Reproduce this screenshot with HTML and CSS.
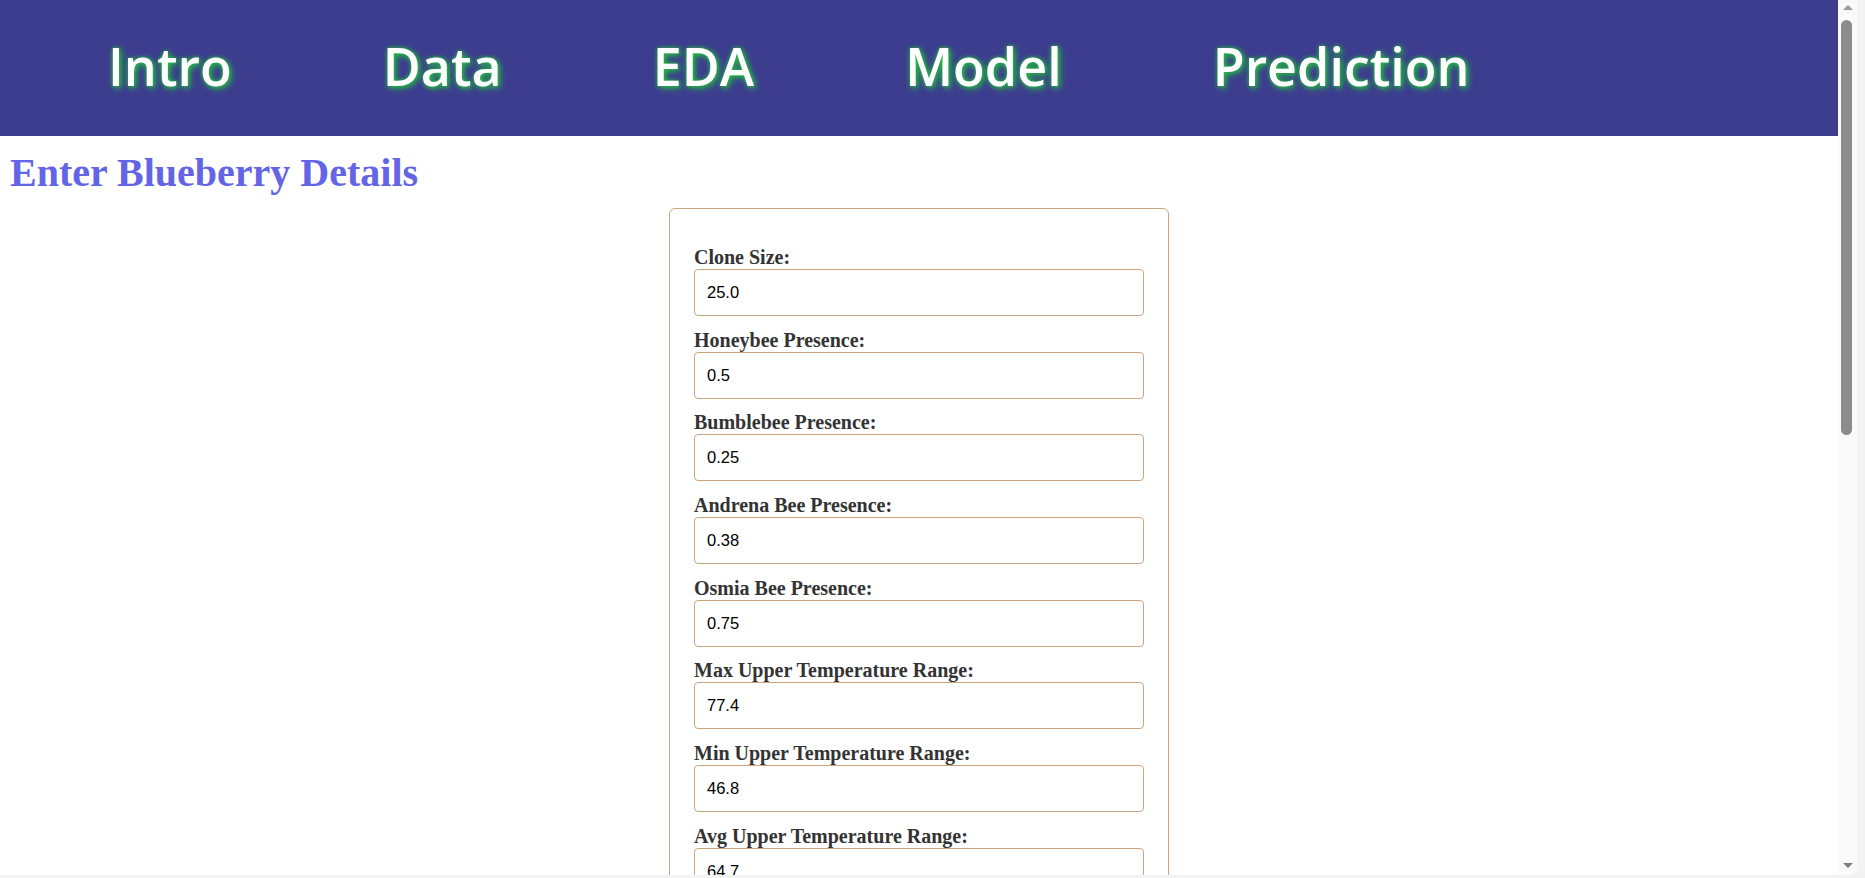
FILE: index.html
```html
<!DOCTYPE html>
<html lang="en">
<head>
<meta charset="utf-8">
<title>Enter Blueberry Details</title>
<link rel="stylesheet" href="styles.css">
</head>
<body>
<div class="window">
  <div class="viewport">
    <header class="topbar">
      <nav class="nav">
        <a class="nav-link" href="#">Intro</a>
        <a class="nav-link" href="#">Data</a>
        <a class="nav-link" href="#">EDA</a>
        <a class="nav-link" href="#">Model</a>
        <a class="nav-link" href="#">Prediction</a>
      </nav>
    </header>
    <main class="content">
      <h1 class="title">Enter Blueberry Details</h1>
      <form class="card">
        <label class="field-label">Clone Size:</label>
        <input class="field-input" type="text" value="25.0">
        <label class="field-label">Honeybee Presence:</label>
        <input class="field-input" type="text" value="0.5">
        <label class="field-label">Bumblebee Presence:</label>
        <input class="field-input" type="text" value="0.25">
        <label class="field-label">Andrena Bee Presence:</label>
        <input class="field-input" type="text" value="0.38">
        <label class="field-label">Osmia Bee Presence:</label>
        <input class="field-input" type="text" value="0.75">
        <label class="field-label">Max Upper Temperature Range:</label>
        <input class="field-input" type="text" value="77.4">
        <label class="field-label">Min Upper Temperature Range:</label>
        <input class="field-input" type="text" value="46.8">
        <label class="field-label">Avg Upper Temperature Range:</label>
        <input class="field-input" type="text" value="64.7">
        <label class="field-label">Max Lower Temperature Range:</label>
        <input class="field-input" type="text" value="55.8">
      </form>
    </main>
  </div>
  <div class="scrollbar">
    <div class="arrow arrow-up"></div>
    <div class="thumb-track">
      <div class="thumb"></div>
    </div>
    <div class="arrow arrow-down"></div>
  </div>
</div>
</body>
</html>
```

FILE: styles.css
```css
html, body {
  margin: 0;
  padding: 0;
  height: 100%;
  overflow: hidden;
}

body {
  background: #f3f3f3;
  font-family: "Liberation Serif", "Times New Roman", serif;
}

.window {
  display: flex;
  width: 1857px;
  height: 875px;
  background: #ffffff;
  border-bottom-right-radius: 8px;
  overflow: hidden;
}

.viewport {
  width: 1838px;
  flex: none;
  height: 875px;
  overflow: hidden;
  background: #ffffff;
}

.topbar {
  height: 136px;
  background: #3d3d8f;
  display: flex;
  align-items: center;
}

.nav {
  display: flex;
  gap: 151px;
  padding-left: 108px;
  padding-bottom: 5px;
}

.nav-link {
  font-family: "Open Sans", "Noto Sans", sans-serif;
  font-weight: 600;
  font-size: 52px;
  line-height: 1;
  color: #ffffff;
  text-decoration: none;
  text-shadow: 2px 2px 6px #22c33f, 0 0 4px #1fb33a;
}

.content {
  display: flex;
  flex-direction: column;
  align-items: center;
}

.title {
  align-self: flex-start;
  margin: 14px 0 12px 10px;
  font-family: "Liberation Serif", "Times New Roman", serif;
  font-size: 40px;
  font-weight: bold;
  line-height: 46px;
  color: #6464e6;
}

.card {
  width: 500px;
  box-sizing: border-box;
  border: 1px solid #c9a581;
  border-radius: 6px;
  padding: 37px 24px 24px;
  display: flex;
  flex-direction: column;
}

.field-label {
  font-family: "Liberation Serif", "Times New Roman", serif;
  font-weight: bold;
  font-size: 20px;
  line-height: 23px;
  color: #333333;
}

.field-input {
  box-sizing: border-box;
  width: 100%;
  height: 47px;
  margin: 0 0 12.7px;
  padding: 0 12px;
  border: 1px solid #c9a581;
  border-radius: 4px;
  font-family: "Liberation Sans", Arial, sans-serif;
  font-size: 16.5px;
  color: #000000;
  background: #ffffff;
  outline: none;
}

.scrollbar {
  width: 19px;
  flex: none;
  background: #fafafa;
  display: flex;
  flex-direction: column;
  align-items: center;
  padding: 5px 0 7px;
  box-sizing: border-box;
}

.arrow {
  width: 0;
  height: 0;
  border-left: 5px solid transparent;
  border-right: 5px solid transparent;
  flex: none;
}

.arrow-up {
  border-bottom: 5px solid #9a9a9a;
}

.arrow-down {
  border-top: 5px solid #7e7e7e;
}

.thumb-track {
  flex: 1;
  width: 100%;
  display: flex;
  justify-content: center;
  padding-top: 10px;
}

.thumb {
  width: 11px;
  height: 415px;
  background: #8c8c8c;
  border-radius: 6px;
  margin-left: -2px;
}
```
